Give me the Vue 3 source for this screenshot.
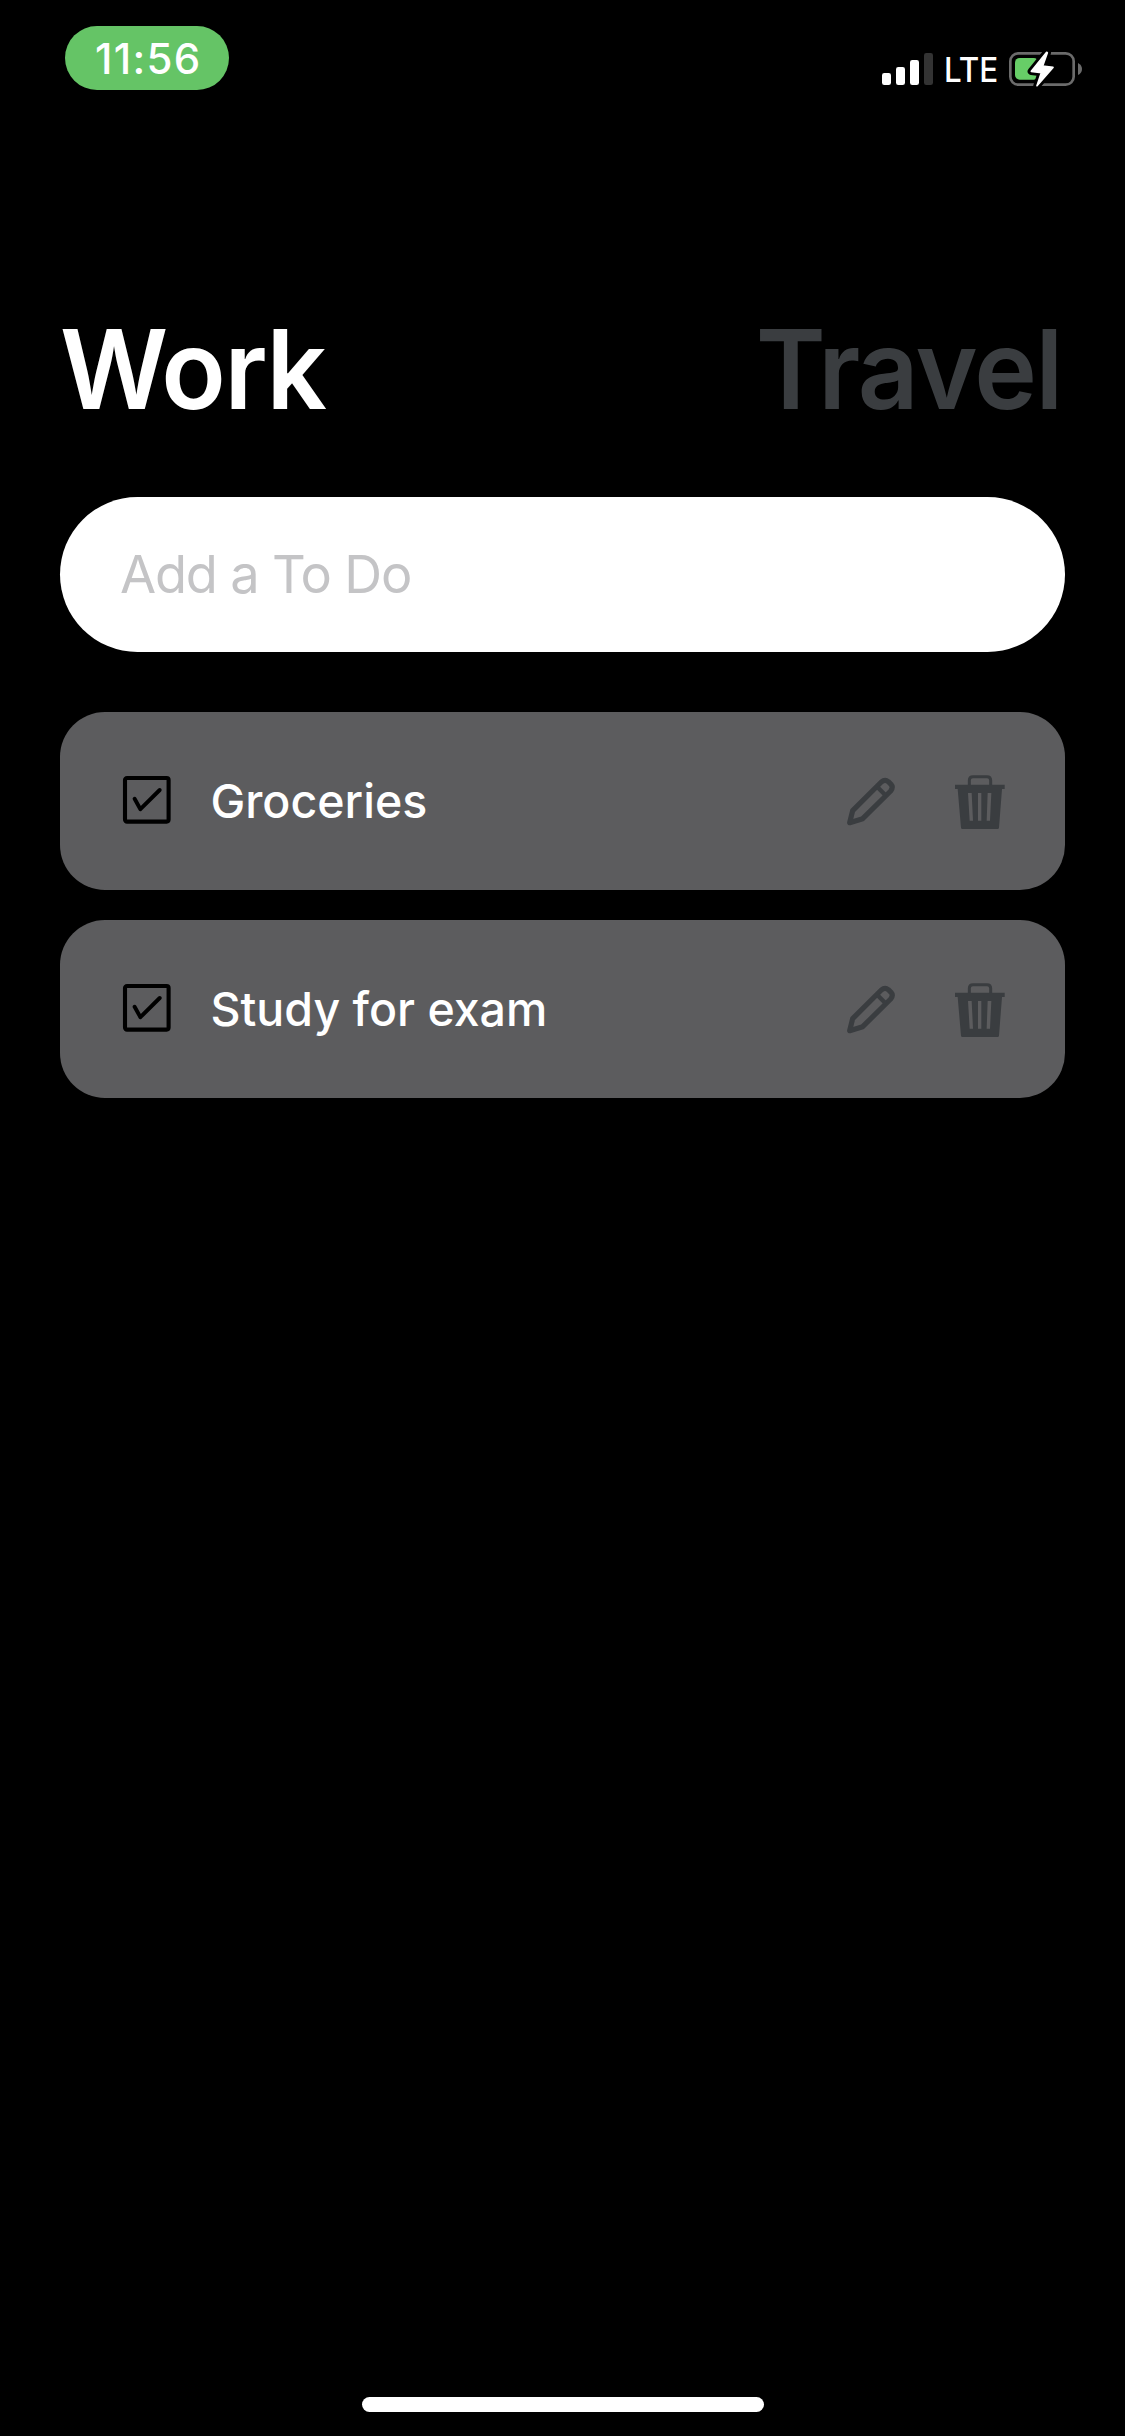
<script setup>
import { ref } from 'vue'

const tabs = ['Work', 'Travel']
const active = ref('Work')
const draft = ref('')
const todos = ref([
  { id: 1, text: 'Groceries' },
  { id: 2, text: 'Study for exam' },
])
</script>

<template>
  <div class="screen">
    <div class="status-bar">
      <div class="clock">11:56</div>
      <div class="indicators">
        <svg class="signal" viewBox="33 33 159 108">
          <rect x="36" y="99" width="27" height="36" rx="7" fill="#fff" />
          <rect x="78" y="81" width="27" height="54" rx="7" fill="#fff" />
          <rect x="120" y="60" width="27" height="75" rx="7" fill="#fff" />
          <rect x="162" y="39" width="27" height="96" rx="7" fill="#333" />
        </svg>
        <span class="network"><span class="network-label">LTE</span></span>
        <svg class="battery" viewBox="414 33 225 108">
          <rect x="421" y="40" width="190" height="94" rx="24" fill="none" stroke="#6b6b6b" stroke-width="8" />
          <path d="M624 69Q636 75 636 87T624 105Z" fill="#6b6b6b" />
          <rect x="435" y="54" width="70" height="65" rx="14" fill="#67ce67" />
          <path
            d="M530 37L484 94L514 98L501 137L549 82L518 78L532 38Z"
            fill="#fff" stroke="#000" stroke-width="22" stroke-linejoin="round"
          />
          <path
            d="M530 37L484 94L514 98L501 137L549 82L518 78L532 38Z"
            fill="#fff" stroke="#fff" stroke-width="5" stroke-linejoin="round"
          />
        </svg>
      </div>
    </div>

    <header class="tabs">
      <button
        v-for="tab in tabs"
        :key="tab"
        class="tab"
        :class="{ active: tab === active }"
        @click="active = tab"
      >{{ tab }}</button>
    </header>

    <input v-model="draft" class="entry" type="text" placeholder="Add a To Do" />

    <ul class="list">
      <li v-for="todo in todos" :key="todo.id" class="card">
        <svg class="icon" viewBox="0 0 54 54" fill="none" stroke="#000" stroke-linecap="round" stroke-linejoin="round">
          <rect x="5" y="4" width="43.6" height="43.6" rx="2" stroke-width="4.1" />
          <path d="M14.6 24.8L20.4 35.2L39.7 16" stroke-width="3.9" />
        </svg>
        <span class="label">{{ todo.text }}</span>
        <svg class="icon" viewBox="72 222 162 162" fill="none" stroke="#3a3d40" stroke-width="15.5" stroke-linejoin="round">
          <path d="M89 368L98 332L184 246Q195 237 205 245L213 253Q221 262 212 273L128 356Z" />
          <path d="M172 261L198 287" stroke-width="13" />
        </svg>
        <svg class="icon trash" viewBox="399 222 162 162">
          <path d="M448 256V241Q448 230 459 230H501Q512 230 512 241V256" fill="none" stroke="#3a3d40" stroke-width="9" />
          <path
            fill="#3a3d40" fill-rule="evenodd"
            d="M405 254H554V267H546L537 383Q537 387 532 387H428Q423 387 423 383L413 267H405ZM444 279L449 362H459L455 279ZM474 279V362H484V279ZM503 279L500 362H510L514 279Z"
          />
        </svg>
      </li>
    </ul>

    <div class="home-indicator"></div>
  </div>
</template>

<style>
body {
  background: #000;
}
</style>

<style scoped>
.screen {
  box-sizing: border-box;
  display: flex;
  flex-direction: column;
  width: 1125px;
  height: 2436px;
  padding-bottom: 24px;
  background: #000;
  color: #fff;
  font-family: Inter, "Liberation Sans", sans-serif;
}

.status-bar {
  display: flex;
  justify-content: space-between;
  align-items: flex-start;
  height: 304px;
  padding: 0 42px 0 65px;
}

.clock {
  box-sizing: border-box;
  width: 164px;
  height: 64px;
  margin-top: 26px;
  padding-left: 30px;
  border-radius: 32px;
  background: #65c466;
  font-size: 42px;
  font-weight: 450;
  line-height: 65px;
  letter-spacing: 1.3px;
}

.indicators {
  display: flex;
  align-items: center;
  height: 36px;
  margin-top: 51px;
}

.signal {
  width: 53px;
  height: 36px;
  margin-right: 10px;
}

.network {
  width: 64px;
  padding-top: 1px;
  font-size: 34.5px;
  font-weight: 450;
  line-height: 36px;
}

.network-label {
  display: inline-block;
  transform: scaleX(0.91);
  transform-origin: left;
}

.battery {
  width: 75px;
  height: 36px;
}

.tabs {
  display: flex;
  justify-content: space-between;
  height: 130px;
  padding: 0 63px 0 60px;
}

.tab {
  padding: 0;
  border: 0;
  background: none;
  color: #3a3d40;
  font: 600 110.5px/130px Inter, "Liberation Sans", sans-serif;
  letter-spacing: -1.6px;
  transform: scaleX(0.96);
  transform-origin: right;
}

.tab.active {
  color: #fff;
  transform-origin: left;
}

.entry {
  box-sizing: border-box;
  height: 155px;
  margin: 63px 60px 60px;
  padding: 0 60px 2px;
  border: 0;
  border-radius: 78px;
  background: #fff;
  color: #000;
  font: 400 52.4px Inter, "Liberation Sans", sans-serif;
  letter-spacing: -1.2px;
}

.entry::placeholder {
  color: #c4c4c6;
  opacity: 1;
}

.list {
  display: flex;
  flex: 1;
  flex-direction: column;
  gap: 30px;
  margin: 0;
  padding: 0 60px;
  list-style: none;
}

.card {
  display: flex;
  align-items: center;
  height: 178px;
  padding: 0 58px 0 60px;
  box-sizing: border-box;
  border-radius: 45px;
  background: #5c5c5e;
}

.icon {
  flex: none;
  width: 54px;
  height: 54px;
  overflow: visible;
}

.label {
  flex: 1;
  margin-left: 36.5px;
  font-size: 46.5px;
  font-weight: 500;
}

.trash {
  margin-left: 55px;
}

.home-indicator {
  width: 402px;
  height: 15px;
  margin-left: 362px;
  border-radius: 7.5px;
  background: #fff;
}
</style>
